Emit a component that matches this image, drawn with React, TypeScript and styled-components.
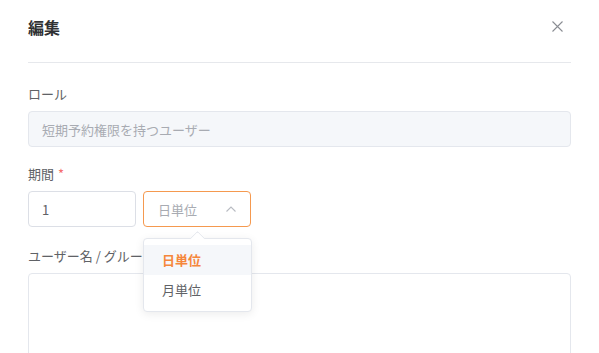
import React from "react";
import styled, { createGlobalStyle } from "styled-components";

const Global = createGlobalStyle`
  html, body { margin: 0; padding: 0; background: #fff; }
  body { font-family: "Noto Sans CJK JP", "Noto Sans", "Liberation Sans", sans-serif; overflow: hidden; }
  * { box-sizing: border-box; }
`;

const Dialog = styled.div`
  width: 599px;
  height: 353px;
  padding: 0 28px;
  background: #fff;
  overflow: hidden;
`;

const Header = styled.div`
  display: flex;
  align-items: center;
  justify-content: space-between;
  height: 63px;
  padding-bottom: 9px;
  border-bottom: 1px solid #e6e8ec;
`;

const Title = styled.h2`
  margin: 0;
  font-size: 16px;
  line-height: 24px;
  font-weight: 700;
  color: #303133;
`;

const Close = styled.button`
  border: none;
  background: none;
  padding: 0;
  margin-right: 8px;
  width: 11px;
  height: 11px;
  display: flex;
  cursor: pointer;
`;

const Body = styled.div`
  padding-top: 22px;
`;

const FormItem = styled.div<{ $gap?: number }>`
  margin-bottom: ${(p) => p.$gap ?? 18}px;
`;

const Label = styled.div`
  font-size: 13px;
  line-height: 18px;
  color: #606266;
  margin-bottom: 8px;
  white-space: nowrap;
`;

const Required = styled.span`
  color: #f56c6c;
  margin-left: 4px;
`;

const Input = styled.div<{ $disabled?: boolean; $width?: number }>`
  height: 36px;
  width: ${(p) => (p.$width ? `${p.$width}px` : "100%")};
  border: 1px solid ${(p) => (p.$disabled ? "#e4e7ed" : "#dcdfe6")};
  background: ${(p) => (p.$disabled ? "#f5f7fa" : "#fff")};
  border-radius: 4px;
  padding: 0 13px;
  display: flex;
  align-items: center;
  font-size: 13px;
  color: ${(p) => (p.$disabled ? "#a8abb2" : "#606266")};
`;

const Row = styled.div`
  display: flex;
  gap: 7px;
`;

const SelectWrap = styled.div`
  position: relative;
  width: 108px;
`;

const SelectBox = styled.div`
  height: 36px;
  border: 1px solid #f5994f;
  border-radius: 4px;
  padding: 0 14px 0 14px;
  display: flex;
  align-items: center;
  justify-content: space-between;
  font-size: 13px;
  color: #a8abb2;
`;

const Dropdown = styled.div`
  position: absolute;
  top: 47px;
  left: 0;
  width: 109px;
  background: #fff;
  border: 1px solid #e4e7ed;
  border-radius: 4px;
  box-shadow: 0 2px 10px rgba(0, 0, 0, 0.08);
  padding: 6px 0;
  z-index: 10;
  &::before {
    content: "";
    position: absolute;
    top: -6px;
    left: 48px;
    width: 10px;
    height: 10px;
    background: #fff;
    border-left: 1px solid #e4e7ed;
    border-top: 1px solid #e4e7ed;
    transform: rotate(45deg);
    border-top-left-radius: 2px;
  }
`;

const Option = styled.div<{ $active?: boolean }>`
  position: relative;
  height: 30px;
  line-height: 30px;
  padding-left: 18px;
  font-size: 13px;
  color: ${(p) => (p.$active ? "#f5873c" : "#606266")};
  font-weight: ${(p) => (p.$active ? 700 : 400)};
  background: ${(p) => (p.$active ? "#f5f7fa" : "transparent")};
`;

const TextArea = styled.div`
  height: 120px;
  border: 1px solid #e4e7ed;
  border-radius: 4px;
`;

export default function App() {
  return (
    <>
      <Global />
      <Dialog>
        <Header>
          <Title>編集</Title>
          <Close aria-label="close">
            <svg width="11" height="11" viewBox="0 0 11 11">
              <path d="M0.5 0.5 L10.5 10.5 M10.5 0.5 L0.5 10.5" stroke="#8a8d93" strokeWidth="1.1" />
            </svg>
          </Close>
        </Header>
        <Body>
          <FormItem $gap={18}>
            <Label>ロール</Label>
            <Input $disabled>短期予約権限を持つユーザー</Input>
          </FormItem>
          <FormItem $gap={20}>
            <Label>
              期間<Required>*</Required>
            </Label>
            <Row>
              <Input $width={108}>1</Input>
              <SelectWrap>
                <SelectBox>
                  <span>日単位</span>
                  <svg width="10" height="6" viewBox="0 0 10 6">
                    <path d="M0.5 5.5 L5 1 L9.5 5.5" fill="none" stroke="#b8bbc2" strokeWidth="1.1" />
                  </svg>
                </SelectBox>
                <Dropdown>
                  <Option $active>日単位</Option>
                  <Option>月単位</Option>
                </Dropdown>
              </SelectWrap>
            </Row>
          </FormItem>
          <FormItem>
            <Label>ユーザー名 / グループ名</Label>
            <TextArea />
          </FormItem>
        </Body>
      </Dialog>
    </>
  );
}
